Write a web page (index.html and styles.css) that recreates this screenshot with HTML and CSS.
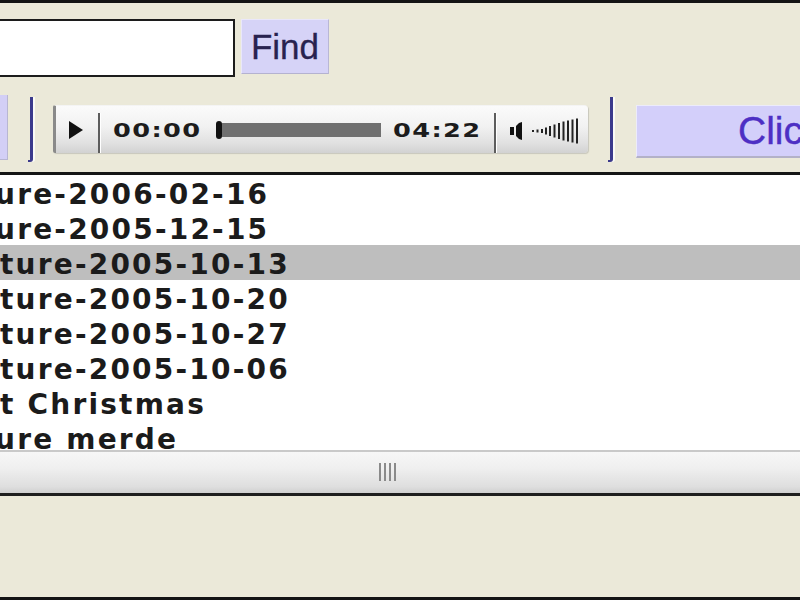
FILE: index.html
```html
<!DOCTYPE html>
<html>
<head>
<meta charset="utf-8">
<link rel="stylesheet" href="styles.css">
</head>
<body>
<div class="win">
  <div class="search">
    <div class="input"></div>
    <button class="find">Find</button>
  </div>
  <div class="toolbar">
    <div class="lbtn"></div>
    <div class="bracket"></div>
    <div class="player">
      <div class="play">
        <svg width="16" height="18" viewBox="0 0 16 18"><polygon points="1,0 15,9 1,18" fill="#111"/></svg>
      </div>
      <div class="sep"></div>
      <div class="time t1"><span>00:00</span></div>
      <div class="knob"></div>
      <div class="bar"></div>
      <div class="time t2"><span>04:22</span></div>
      <div class="sep sep2"></div>
      <svg class="vol" width="70" height="30" viewBox="0 0 70 30">
        <rect x="0" y="11" width="4" height="8" fill="#111"/>
        <polygon points="6,10 9,7 12,6 12,24 9,23 6,20" fill="#111"/>
        <rect x="22" y="14" width="2" height="2" fill="#222"/>
        <rect x="26.5" y="13.5" width="2" height="3" fill="#222"/>
        <rect x="31" y="13" width="2" height="4" fill="#222"/>
        <rect x="35" y="11.5" width="2" height="7" fill="#222"/>
        <rect x="39" y="10" width="2" height="10" fill="#222"/>
        <rect x="43.5" y="8.5" width="2" height="13" fill="#222"/>
        <rect x="48" y="7" width="2" height="16" fill="#222"/>
        <rect x="52.5" y="5.5" width="2" height="19" fill="#222"/>
        <rect x="57" y="4.5" width="2" height="21" fill="#222"/>
        <rect x="61.5" y="3.5" width="2" height="23" fill="#222"/>
        <rect x="66" y="2.5" width="2" height="25" fill="#222"/>
      </svg>
    </div>
    <div class="bracket"></div>
    <button class="click">Click</button>
  </div>
  <div class="list">
    <div class="rows">
      <div class="row cut">ure-2006-02-16</div>
      <div class="row cut">ure-2005-12-15</div>
      <div class="row sel">ture-2005-10-13</div>
      <div class="row">ture-2005-10-20</div>
      <div class="row">ture-2005-10-27</div>
      <div class="row">ture-2005-10-06</div>
      <div class="row">t Christmas</div>
      <div class="row cut">ure merde</div>
    </div>
    <div class="hscroll">
      <div class="grip"><i></i><i></i><i></i><i></i></div>
    </div>
  </div>
  <div class="footer"></div>
</div>
</body>
</html>
```
FILE: styles.css
```css
html, body {
  margin: 0;
  padding: 0;
  overflow: hidden;
  width: 800px;
  height: 600px;
}
body {
  background: #ebe9d9;
  font-family: "Liberation Sans", Arial, sans-serif;
}
.win {
  box-sizing: border-box;
  width: 800px;
  height: 600px;
  display: flex;
  flex-direction: column;
  border-top: 3px solid #141414;
  border-bottom: 3px solid #141414;
  background: #ebe9d9;
  overflow: hidden;
}
.search {
  display: flex;
  align-items: flex-start;
  margin-top: 16px;
  height: 58px;
  flex: none;
}
.search > * {
  flex: none;
}
.input {
  box-sizing: border-box;
  width: 246px;
  height: 58px;
  margin-left: -11px;
  background: #fff;
  border: 2px solid #1c1c1c;
}
.find {
  box-sizing: border-box;
  margin: 0 0 0 6px;
  width: 88px;
  height: 55px;
  padding: 0;
  background: #d6d3f7;
  border: 1px solid #e9e7fb;
  border-right-color: #b9b7d6;
  border-bottom-color: #b4b2d0;
  font-family: "Liberation Sans", Arial, sans-serif;
  font-size: 35px;
  color: #28224f;
  line-height: 53px;
  -webkit-text-stroke: 0.3px #28224f;
}
.toolbar {
  display: flex;
  align-items: flex-start;
  margin-top: 18px;
  height: 67px;
  flex: none;
}
.toolbar > * {
  flex: none;
}
.lbtn {
  box-sizing: border-box;
  width: 8px;
  height: 65px;
  background: #d3cff6;
  border-right: 1px solid #b8b6d2;
  border-bottom: 1px solid #b8b6d2;
}
.bracket {
  box-sizing: border-box;
  width: 5px;
  height: 65px;
  margin-top: 2px;
  margin-left: 20px;
  border-right: 3px solid #3b3a8c;
  border-bottom: 2px solid #3b3a8c;
  border-bottom-right-radius: 3px;
  box-shadow: 2px 0 0 #fafaf6;
}
.player {
  box-sizing: border-box;
  display: flex;
  align-items: center;
  width: 535px;
  height: 48px;
  margin-top: 10px;
  margin-left: 20px;
  background: linear-gradient(#fbfbfb 0%, #f1f1f1 45%, #e0e0e0 80%, #d2d2d2 100%);
  border-left: 3px solid #8a8a8a;
  border-top: 1px solid #f4f4f4;
  border-radius: 2px 4px 4px 2px;
  box-shadow: 1px 1px 1px #c8c7bc;
}
.player > * {
  flex: none;
}
.play {
  width: 42px;
  height: 100%;
  display: flex;
  align-items: center;
  justify-content: center;
}
.play svg {
  margin-left: -3px;
}
.sep {
  width: 2px;
  height: 40px;
  margin-top: 6px;
  background: #5d5d5d;
  box-shadow: 1px 0 0 #fff;
}
.time {
  width: 88px;
  height: 20px;
  overflow: visible;
  white-space: nowrap;
}
.time span {
  display: inline-block;
  font-family: "DejaVu Sans", Verdana, sans-serif;
  font-weight: bold;
  font-size: 19px;
  line-height: 20px;
  letter-spacing: 1px;
  color: #1c1c1c;
  transform: scaleX(1.35);
  transform-origin: 0 50%;
}
.t1 {
  margin-left: 13px;
}
.knob {
  width: 6px;
  height: 18px;
  margin-left: 15px;
  background: #111;
  border-radius: 3px;
}
.bar {
  width: 159px;
  height: 14px;
  background: #707070;
}
.t2 {
  margin-left: 12px;
}
.sep2 {
  margin-left: 13px;
}
.vol {
  margin-left: 14px;
  margin-top: 3px;
}
.click {
  box-sizing: border-box;
  width: 320px;
  height: 53px;
  margin: 10px 0 0 23px;
  padding: 0 0 0 101px;
  text-align: left;
  background: #d3cffa;
  border: 1px solid #ecebfb;
  border-bottom: 2px solid #b3b1c8;
  font-family: "Liberation Sans", Arial, sans-serif;
  font-size: 39px;
  line-height: 50px;
  color: #4d2fc4;
  -webkit-text-stroke: 0.4px #4d2fc4;
}
.list {
  margin-top: 10px;
  flex: none;
  border-top: 3px solid #151515;
  border-bottom: 3px solid #1e1e1e;
  background: #fff;
}
.rows {
  height: 275px;
  overflow: hidden;
}
.row {
  box-sizing: border-box;
  height: 35px;
  padding-top: 4px;
  line-height: 31px;
  font-family: "DejaVu Sans", Verdana, sans-serif;
  font-weight: bold;
  font-size: 28px;
  letter-spacing: 2.2px;
  color: #1b1b1b;
  white-space: nowrap;
}
.row.cut {
  text-indent: -5px;
}
.row.sel {
  background: #bebebe;
}
.hscroll {
  box-sizing: border-box;
  height: 43px;
  border-top: 2px solid #c9c9c9;
  background: linear-gradient(#f7f7f7 0%, #efefef 40%, #dedede 85%, #cfcfcf 100%);
  display: flex;
  justify-content: center;
  align-items: center;
}
.grip {
  display: flex;
  gap: 3px;
  margin-left: -25px;
  margin-top: -2px;
}
.grip i {
  display: block;
  width: 2px;
  height: 18px;
  background: #8a8a8a;
}
.footer {
  flex: 1;
  background: #ebe9d9;
}
```
